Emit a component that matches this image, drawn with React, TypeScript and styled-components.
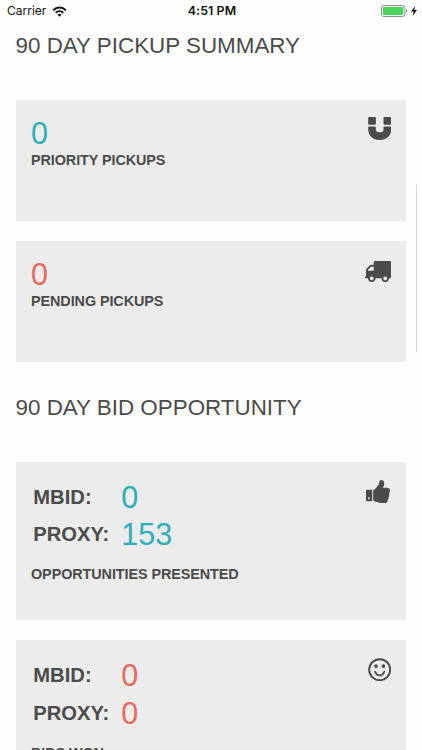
import React from "react";
import styled, { createGlobalStyle } from "styled-components";

const GlobalStyle = createGlobalStyle`
  * { box-sizing: border-box; }
  html, body { margin: 0; height: 100%; overflow: hidden; background: #fefefe; }
  body { font-family: "Liberation Sans", Arial, Helvetica, sans-serif; color: #4b4b4b; }
`;

const Screen = styled.div`
  position: relative;
  width: 422px;
  height: 750px;
  overflow: hidden;
  background: #fefefe;
`;

const StatusBar = styled.header`
  display: grid;
  grid-template-columns: 1fr auto 1fr;
  align-items: center;
  height: 22px;
  padding: 0 5px 0 7px;
  font-family: Inter, sans-serif;
  font-size: 12px;
  line-height: 22px;
  color: #111;
`;

const Network = styled.div`
  display: flex;
  align-items: center;
  gap: 6px;
`;

const Time = styled.time`
  font-size: 12.4px;
  font-weight: 600;
  letter-spacing: 0.1px;
`;

const Power = styled.div`
  display: flex;
  align-items: center;
  justify-content: flex-end;
  gap: 3px;
`;

const Section = styled.section`
  padding: 0 16px 0 15.5px;
`;

const Heading = styled.h2<{ $top: number }>`
  margin: 0;
  padding-top: ${(p) => p.$top}px;
  height: ${(p) => p.$top + 67}px;
  font-size: 22.4px;
  font-weight: 400;
  line-height: 26px;
  white-space: nowrap;
`;

const CardList = styled.div`
  display: flex;
  flex-direction: column;
  gap: 20.4px;
`;

const Card = styled.article<{ $height: number }>`
  display: flex;
  justify-content: space-between;
  height: ${(p) => p.$height}px;
  padding: 16px 15px 0 15.5px;
  background: #ececec;
`;

const Figure = styled.span<{ $tone: "teal" | "coral" }>`
  font-size: 30.6px;
  line-height: 34px;
  color: ${(p) => (p.$tone === "teal" ? "#2caebb" : "#e96a5c")};
`;

const Summary = styled.div`
  display: flex;
  flex-direction: column;
`;

const Caption = styled.span<{ $gap: number }>`
  margin-top: ${(p) => p.$gap}px;
  font-size: 14.4px;
  font-weight: 700;
  letter-spacing: -0.08px;
  line-height: 18px;
  white-space: nowrap;
`;

const Breakdown = styled.div`
  display: grid;
  grid-template-columns: 88px auto;
  grid-auto-rows: 37.7px;
  align-items: center;
  padding-left: 2.3px;
`;

const Term = styled.span`
  font-size: 20.2px;
  font-weight: 700;
  line-height: 34px;
`;

const Glyph = styled.svg`
  display: block;
  flex: none;
  fill: #4b4b4b;
`;

const GlyphSlot = styled.div<{ $top: number; $right?: number }>`
  padding-top: ${(p) => p.$top}px;
  padding-right: ${(p) => p.$right ?? 0}px;
`;

const ScrollThumb = styled.div`
  position: absolute;
  top: 184px;
  right: 5px;
  width: 1.5px;
  height: 168px;
  border-radius: 1px;
  background: #d5d5d5;
`;

const Wifi = () => (
  <svg width="15" height="11" viewBox="0 0 15 11" fill="none" stroke="#111" strokeWidth="2">
    <path d="M1.2 4.2C4.8 .7 10.2 .7 13.8 4.2" />
    <path d="M3.7 6.8C5.9 4.7 9.1 4.7 11.3 6.8" />
    <path d="M5.4 8.6C6.6 7.5 8.4 7.5 9.6 8.6L7.5 10.7Z" fill="#111" stroke="none" />
  </svg>
);

const Battery = () => (
  <svg width="27" height="12" viewBox="0 0 27 12">
    <rect x=".5" y=".5" width="23.4" height="11" rx="2.4" fill="#fff" stroke="#8f8f8f" />
    <rect x="2" y="2" width="20.4" height="8" rx="1" fill="#4cd35f" />
    <path d="M25 4.2Q26.4 4.6 26.4 6T25 7.8Z" fill="#8f8f8f" />
  </svg>
);

const Bolt = () => (
  <svg width="6" height="10" viewBox="0 0 6 10">
    <path d="M4.1 0L0 5.6H2.6L1.6 10L6 4.1H3.3Z" fill="#111" />
  </svg>
);

const Magnet = () => (
  <Glyph width="23.4" height="23" viewBox="0 0 1536 1536">
    <path d="M1536 704v128q0 201-98.500 362t-274 251.500-395.500 90.500-395.500-90.500-274-251.500-98.500-362v-128q0-26 19-45t45-19h384q26 0 45 19t19 45v128q0 52 23.500 90t53.500 57 71 30 64 13 44 2 44-2 64-13 71-30 53.500-57 23.500-90v-128q0-26 19-45t45-19h384q26 0 45 19t19 45zM512 64v384q0 26-19 45t-45 19h-384q-26 0-45-19t-19-45v-384q0-26 19-45t45-19h384q26 0 45 19t19 45zM1536 64v384q0 26-19 45t-45 19h-384q-26 0-45-19t-19-45v-384q0-26 19-45t45-19h384q26 0 45 19t19 45z" />
  </Glyph>
);

const Truck = () => (
  <Glyph width="26" height="21.200" viewBox="64 256 1728 1408">
    <path d="M640 1408q0-52-38-90t-90-38-90 38-38 90 38 90 90 38 90-38 38-90zm-384-512h384v-256h-158q-13 0-22 9l-195 195q-9 9-9 22v30zm1280 512q0-52-38-90t-90-38-90 38-38 90 38 90 90 38 90-38 38-90zm256-1088v1024q0 15-4 26.500t-13.500 18.500-16.500 11.500-23.500 6-22.500 2-25.500 0-22.500-.5q0 106-75 181t-181 75-181-75-75-181h-384q0 106-75 181t-181 75-181-75-75-181h-64q-3 0-22.500.5t-25.500 0-22.500-2-23.500-6-16.500-11.500-13.500-18.500-4-26.500q0-26 19-45t45-19v-320q0-8-.5-35t0-38 2.500-34.500 6.500-37 14-30.500 22.500-30l198-198q19-19 50.500-32t58.500-13h160v-192q0-26 19-45t45-19h1024q26 0 45 19t19 45z" />
  </Glyph>
);

const ThumbsUp = () => (
  <Glyph width="24" height="23.100" viewBox="64 128 1600 1536">
    <path d="M320 1344q0-26-19-45t-45-19q-27 0-45.500 19t-18.500 45q0 27 18.500 45.500t45.500 18.500q26 0 45-18.500t19-45.500zm160-512v640q0 26-19 45t-45 19h-288q-26 0-45-19t-19-45v-640q0-26 19-45t45-19h288q26 0 45 19t19 45zm1184 0q0 86-55 149 15 44 15 76 3 76-43 137 17 56 0 117-15 57-54 94 9 112-49 181-64 76-197 78h-129q-66 0-144-15.500t-121.500-29-120.500-39.500q-123-43-158-44-26-1-45-19.500t-19-44.500v-641q0-25 18-43.500t43-20.500q24-2 76-59t101-121q68-87 101-120 18-18 31-48t17.500-48.500 13.500-60.500q7-39 12.500-61t19.500-52 34-50q19-19 45-19 46 0 82.500 10.500t60 26 40 40.500 24 45 12 50 5 45 .5 39q0 38-9.500 76t-19 60-27.500 56q-3 6-10 18t-11 22-8 24h277q78 0 135 57t57 135z" />
  </Glyph>
);

const Smile = () => (
  <Glyph width="23.4" height="23.4" viewBox="0 0 24 24">
    <circle cx="12" cy="12" r="10.800" fill="none" stroke="#4b4b4b" strokeWidth="2" />
    <circle cx="8.200" cy="8.300" r="1.900" />
    <circle cx="15.800" cy="8.300" r="1.900" />
    <path d="M7.300 14.100Q8.700 17.800 12 17.800T16.700 14.100" fill="none" stroke="#4b4b4b" strokeWidth="1.900" strokeLinecap="round" />
  </Glyph>
);

export default function App() {
  return (
    <>
      <GlobalStyle />
      <Screen>
        <StatusBar>
          <Network>Carrier <Wifi /></Network>
          <Time>4:51 PM</Time>
          <Power><Battery /><Bolt /></Power>
        </StatusBar>
        <Section>
          <Heading $top={10.500}>90 DAY PICKUP SUMMARY</Heading>
          <CardList>
            <Card $height={121}>
              <Summary>
                <Figure $tone="teal">0</Figure>
                <Caption $gap={1}>PRIORITY PICKUPS</Caption>
              </Summary>
              <GlyphSlot $top={1.700}><Magnet /></GlyphSlot>
            </Card>
            <Card $height={121}>
              <Summary>
                <Figure $tone="coral">0</Figure>
                <Caption $gap={1}>PENDING PICKUPS</Caption>
              </Summary>
              <GlyphSlot $top={4}><Truck /></GlyphSlot>
            </Card>
          </CardList>
        </Section>
        <Section>
          <Heading $top={33}>90 DAY BID OPPORTUNITY</Heading>
          <CardList>
            <Card $height={158}>
              <Summary>
                <Breakdown>
                  <Term>MBID:</Term><Figure $tone="teal">0</Figure>
                  <Term>PROXY:</Term><Figure $tone="teal">153</Figure>
                </Breakdown>
                <Caption $gap={12}>OPPORTUNITIES PRESENTED</Caption>
              </Summary>
              <GlyphSlot $top={2} $right={1}><ThumbsUp /></GlyphSlot>
            </Card>
            <Card $height={158}>
              <Summary>
                <Breakdown>
                  <Term>MBID:</Term><Figure $tone="coral">0</Figure>
                  <Term>PROXY:</Term><Figure $tone="coral">0</Figure>
                </Breakdown>
                <Caption $gap={12}>BIDS WON</Caption>
              </Summary>
              <GlyphSlot $top={1.500}><Smile /></GlyphSlot>
            </Card>
          </CardList>
        </Section>
        <ScrollThumb />
      </Screen>
    </>
  );
}
